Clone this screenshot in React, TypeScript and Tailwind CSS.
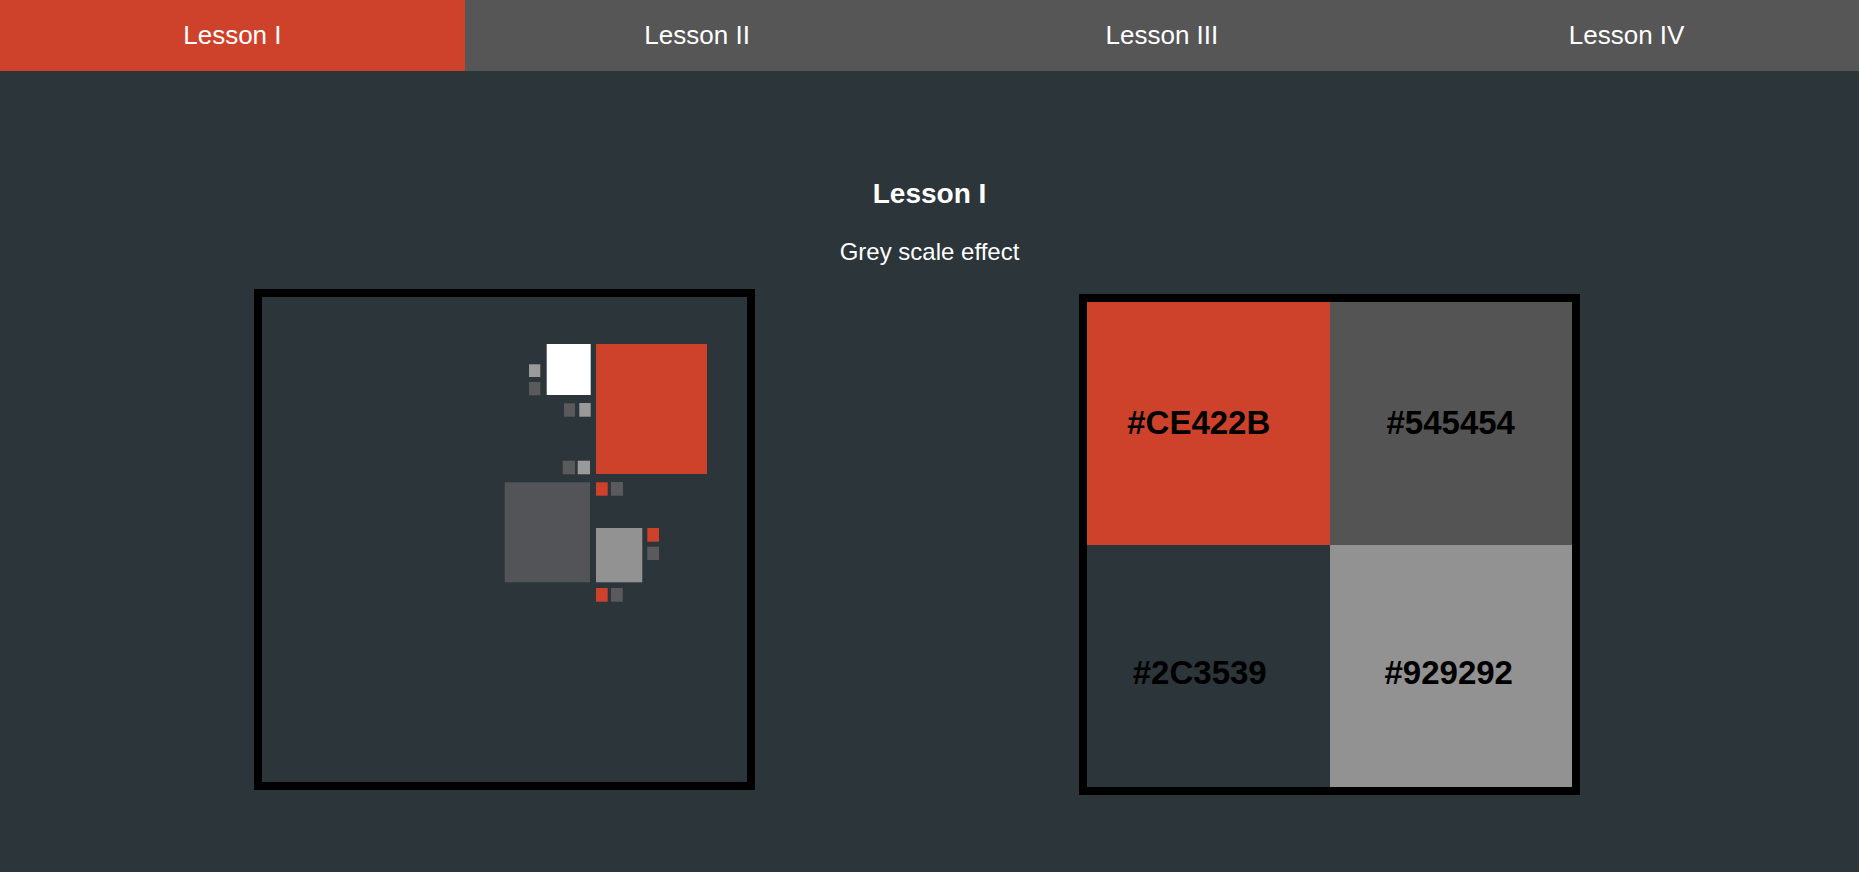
import React from "react";

const tabs = ["Lesson I", "Lesson II", "Lesson III", "Lesson IV"];

type Sq = { x: number; y: number; w: number; h: number; c: string };

const RED = "#CE422B";
const DARK = "#5a5a5c";
const LIGHT = "#9a9a9a";

const squares: Sq[] = [
  { x: 284.7, y: 47, w: 44, h: 51, c: "#ffffff" },
  { x: 334, y: 47, w: 111, h: 130, c: RED },
  { x: 242.7, y: 185.3, w: 85.3, h: 100, c: "#535457" },
  { x: 334, y: 231, w: 46.3, h: 54.3, c: "#929292" },
  { x: 267, y: 67.3, w: 11.3, h: 12.7, c: LIGHT },
  { x: 267, y: 85, w: 11.3, h: 13.3, c: DARK },
  { x: 302, y: 106.3, w: 11, h: 13.4, c: DARK },
  { x: 317.3, y: 106, w: 11.4, h: 13.7, c: LIGHT },
  { x: 300.7, y: 163.7, w: 12.3, h: 13.6, c: DARK },
  { x: 315.7, y: 163.7, w: 12.3, h: 13.6, c: LIGHT },
  { x: 334, y: 185.3, w: 11.7, h: 13.4, c: RED },
  { x: 349, y: 185, w: 12, h: 13.7, c: DARK },
  { x: 385.3, y: 231, w: 11.7, h: 13.7, c: RED },
  { x: 385.3, y: 249.7, w: 11.7, h: 13.3, c: DARK },
  { x: 334, y: 291, w: 11.7, h: 13.7, c: RED },
  { x: 349, y: 291, w: 11.7, h: 13.7, c: DARK },
];

export default function App() {
  return (
    <div
      className="min-h-[872px] w-full bg-[#2C3539] text-white"
      style={{ fontFamily: '"Liberation Sans", Arial, sans-serif' }}
    >
      <nav className="flex h-[71px] w-full">
        {tabs.map((t, i) => (
          <div
            key={t}
            className={
              "flex flex-1 items-center justify-center text-[26px] text-white " +
              (i === 0 ? "bg-[#CE422B]" : "bg-[#565656]")
            }
          >
            {t}
          </div>
        ))}
      </nav>

      <main className="flex flex-col pt-[107px]">
        <h1 className="text-center text-[28px] font-bold leading-[32px]">Lesson I</h1>
        <p className="mt-[28px] text-center text-[24px] leading-[28px]">Grey scale effect</p>

        <div className="mt-[23px] flex items-start gap-[324px] pl-[254px]">
          <div className="h-[501px] w-[501px] border-[8px] border-black bg-[#2C3539]">
            <svg width="485" height="485" viewBox="0 0 485 485" className="block">
              {squares.map((s, i) => (
                <rect key={i} x={s.x} y={s.y} width={s.w} height={s.h} fill={s.c} />
              ))}
            </svg>
          </div>

          <div className="mt-[5px] grid h-[501px] w-[501px] grid-cols-2 grid-rows-2 border-[8px] border-black">
            <div className="flex items-center justify-center bg-[#CE422B] pr-[19px] pb-[2px]">
              <span className="text-[33px] font-bold text-black">#CE422B</span>
            </div>
            <div className="flex items-center justify-center bg-[#545454] pb-[2px]">
              <span className="text-[33px] font-bold text-black">#545454</span>
            </div>
            <div className="flex items-center justify-center bg-[#2C3539] pr-[17px] pt-[13px]">
              <span className="text-[33px] font-bold text-black">#2C3539</span>
            </div>
            <div className="flex items-center justify-center bg-[#929292] pr-[4px] pt-[13px]">
              <span className="text-[33px] font-bold text-black">#929292</span>
            </div>
          </div>
        </div>
      </main>
    </div>
  );
}
